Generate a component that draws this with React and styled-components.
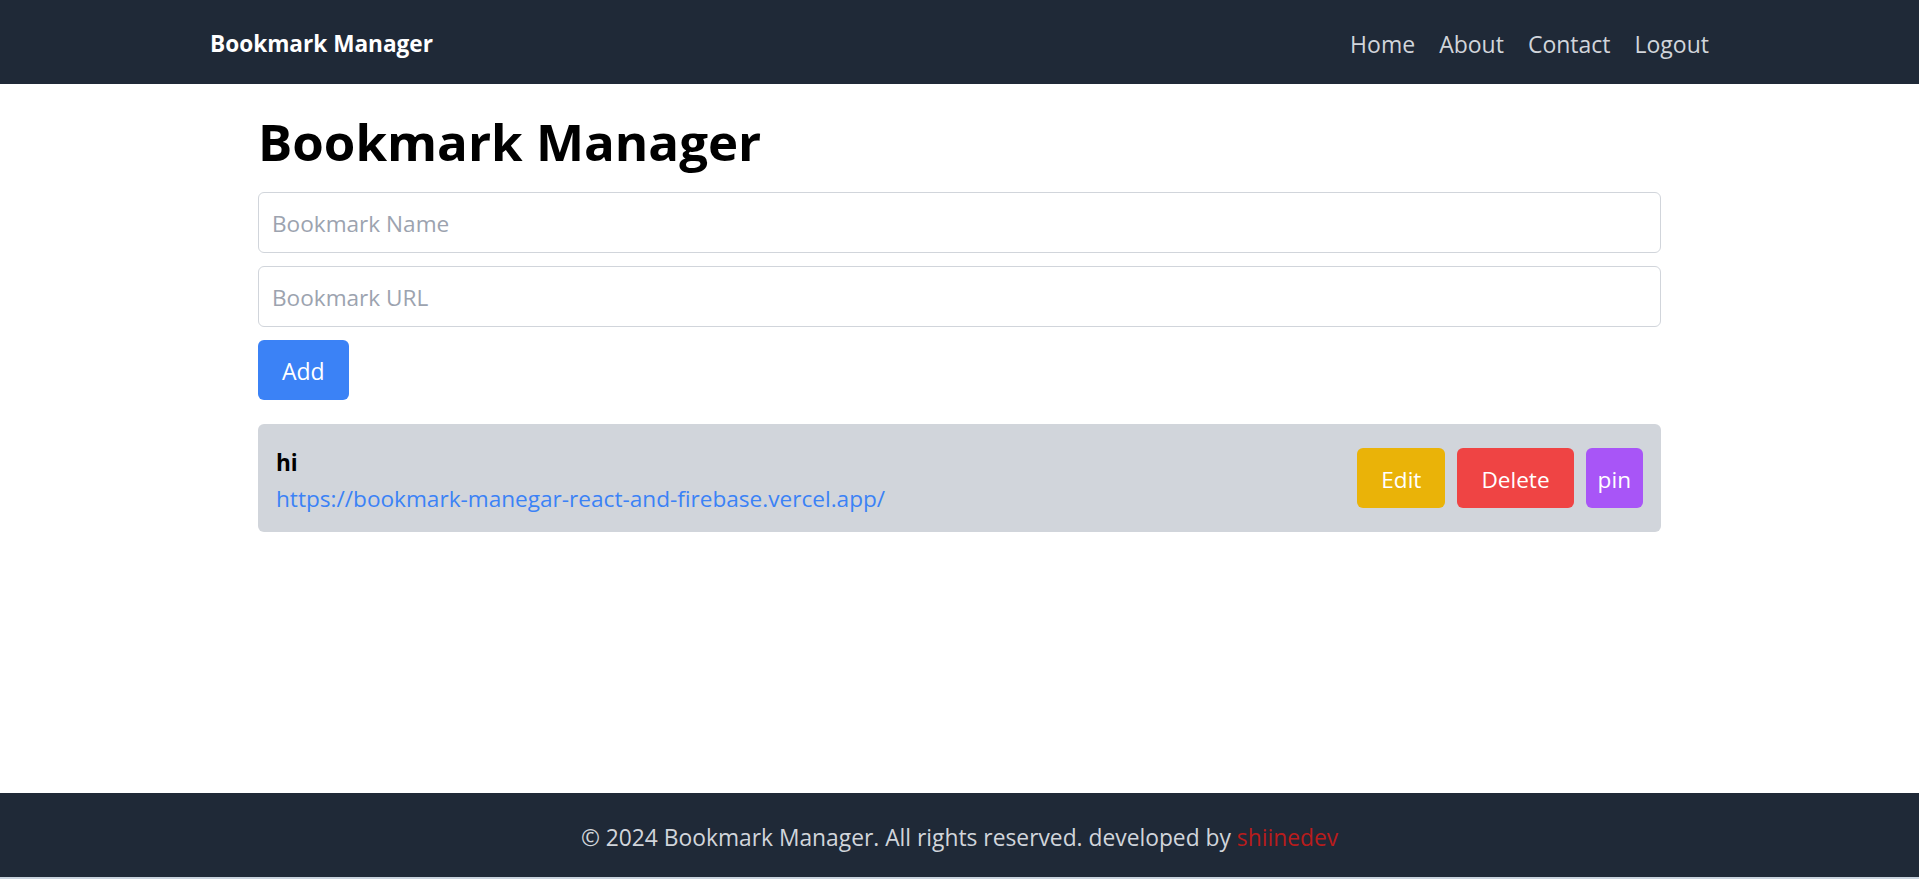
import React from "react";
import styled, { createGlobalStyle } from "styled-components";

const GlobalStyle = createGlobalStyle`
  html {
    background: #c9d3de;
  }
  body {
    margin: 0;
    font-family: "Open Sans", "Noto Sans", Arial, sans-serif;
  }
  * {
    box-sizing: border-box;
  }
`;

//* ----------
//* data
//* ----------
const bookmarks = [
  { id: 1, name: "hi", url: "https://bookmark-manegar-react-and-firebase.vercel.app/" },
];

const links = ["Home", "About", "Contact", "Logout"];

export default function App() {
  return (
    <Page>
      <GlobalStyle />
      <Nav>
        <NavInner>
          <Brand>Bookmark Manager</Brand>
          <Links>
            {links.map((l) => (
              <NavLink key={l} href="#">
                {l}
              </NavLink>
            ))}
          </Links>
        </NavInner>
      </Nav>

      <Main>
        <Title>Bookmark Manager</Title>
        <Form onSubmit={(e) => e.preventDefault()}>
          <Input placeholder="Bookmark Name" />
          <Input placeholder="Bookmark URL" />
          <AddBtn type="submit">Add</AddBtn>
        </Form>

        <List>
          {bookmarks.map((b) => (
            <Card key={b.id}>
              <Info>
                <Name>{b.name}</Name>
                <Url href={b.url}>{b.url}</Url>
              </Info>
              <Actions>
                <ActionBtn $bg="#eab308">Edit</ActionBtn>
                <ActionBtn $bg="#ef4444">Delete</ActionBtn>
                <ActionBtn $bg="#a855f7" $compact>
                  pin
                </ActionBtn>
              </Actions>
            </Card>
          ))}
        </List>
      </Main>

      <Footer>
        © 2024 Bookmark Manager. All rights reserved. developed by <Dev>shiinedev</Dev>
      </Footer>
    </Page>
  );
}

const Page = styled.div`
  display: flex;
  flex-direction: column;
  min-height: calc(100vh - 2px);
  background: #ffffff;
`;

const Nav = styled.nav`
  background: #1f2937;
  padding: 26px 0 22px;
`;

const NavInner = styled.div`
  display: flex;
  justify-content: space-between;
  align-items: center;
  max-width: 1499px;
  margin: 0 auto;
  line-height: 36px;
`;

const Brand = styled.div`
  color: #ffffff;
  font-size: 22.6px;
  font-weight: 700;
`;

const Links = styled.div`
  display: flex;
  gap: 24px;
`;

const NavLink = styled.a`
  color: #d1d5db;
  font-size: 23px;
  text-decoration: none;
`;

const Main = styled.main`
  flex: 1;
  width: 1403px;
  margin: 0 auto;
  padding-top: 27px;
`;

const Title = styled.h1`
  margin: 0 0 21px 0;
  font-size: 51px;
  line-height: 60px;
  font-weight: 700;
  color: #000000;
`;

const Form = styled.form`
  display: flex;
  flex-direction: column;
  align-items: flex-start;
  gap: 13px;
`;

const Input = styled.input`
  width: 100%;
  height: 61px;
  padding: 2px 13px 0;
  border: 1px solid #d1d5db;
  border-radius: 6px;
  font-family: inherit;
  font-size: 22.6px;
  color: #111827;
  outline: none;

  &::placeholder {
    color: #9ca3af;
  }
`;

const AddBtn = styled.button`
  height: 60px;
  padding: 2px 24px 0;
  border: none;
  border-radius: 6px;
  background: #3b82f6;
  color: #ffffff;
  font-family: inherit;
  font-size: 23px;
`;

const List = styled.div`
  margin-top: 24px;
`;

const Card = styled.div`
  display: flex;
  justify-content: space-between;
  align-items: center;
  padding: 18px;
  background: #d1d5db;
  border-radius: 6px;
`;

const Info = styled.div`
  display: flex;
  flex-direction: column;
  padding-top: 3px;
  margin-bottom: -3px;
  line-height: 36px;
  font-size: 22.6px;
`;

const Name = styled.span`
  font-weight: 700;
  color: #000000;
`;

const Url = styled.a`
  color: #3b82f6;
  text-decoration: none;
`;

const Actions = styled.div`
  display: flex;
  gap: 12px;
`;

const ActionBtn = styled.button`
  height: 60px;
  padding: 2px ${(p) => (p.$compact ? "12px" : "24px")} 0;
  border: none;
  border-radius: 6px;
  background: ${(p) => p.$bg};
  color: #ffffff;
  font-family: inherit;
  font-size: 22.6px;
`;

const Footer = styled.footer`
  background: #1f2937;
  padding: 27px 24px 21px;
  text-align: center;
  color: #d1d5db;
  font-size: 22.8px;
  line-height: 36px;
`;

const Dev = styled.span`
  color: #b91c1c;
`;
